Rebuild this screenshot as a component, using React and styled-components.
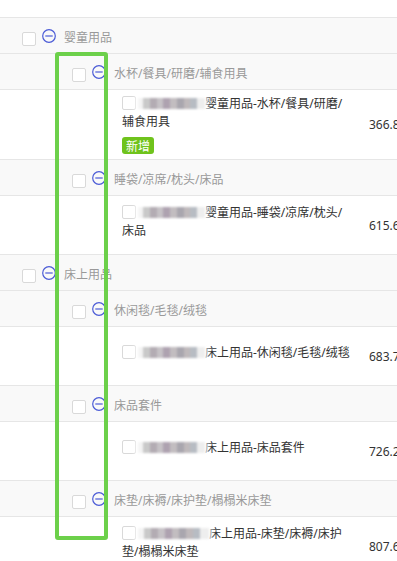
import React from "react";
import styled, { createGlobalStyle } from "styled-components";

const Global = createGlobalStyle`
  html, body { margin: 0; padding: 0; background: #fff; }
  body {
    font-family: "Noto Sans", "Noto Sans CJK SC", sans-serif;
    overflow: hidden;
  }
  * { box-sizing: border-box; }
`;

const Page = styled.div`
  position: relative;
  width: 397px;
  height: 561px;
  overflow: hidden;
`;

const Table = styled.div`
  width: 520px;
`;

const TopRow = styled.div`
  height: 18px;
  border-bottom: 1px solid #e6e6e6;
`;

const GroupRow = styled.div`
  display: flex;
  align-items: center;
  height: 36px;
  padding-left: ${(p) => 22 + p.$level * 50}px;
  background: #f9f9f9;
  border-bottom: 1px solid #e6e6e6;
`;

const Box = styled.span`
  display: inline-block;
  width: 14px;
  height: 14px;
  border: 1px solid #d9d9d9;
  border-radius: 2px;
  background: #fff;
  flex: none;
`;

const RowBox = styled(Box)`
  margin-top: 6px;
`;

const InlineBox = styled(Box)`
  vertical-align: -2px;
  margin-right: 2px;
`;

const IconWrap = styled.span`
  display: inline-flex;
  width: 14px;
  height: 14px;
  margin-left: 6px;
  flex: none;
`;

const Label = styled.span`
  margin-left: 8px;
  margin-top: 2px;
  font-size: 12px;
  color: #999;
  white-space: nowrap;
`;

const ItemRow = styled.div`
  display: flex;
  align-items: center;
  min-height: 59px;
  padding: 5px 0 5px 122px;
  border-bottom: 1px solid #e6e6e6;
  background: #fff;
`;

const NameCell = styled.div`
  width: 230px;
  flex: none;
`;

const NameText = styled.div`
  font-size: 12px;
  line-height: 18px;
  color: #333;
`;

const Blur = styled.span`
  display: inline-block;
  width: ${(p) => p.$w}px;
  height: 11px;
  vertical-align: -1px;
  background: linear-gradient(
    90deg,
    #f4f4f4 0 8%,
    #c9c9c9 8% 18%,
    #b3acb3 18% 28%,
    #c6c2c6 28% 38%,
    #aea2b0 38% 48%,
    #c2bdc0 48% 58%,
    #a9a6ae 58% 68%,
    #bfb9bb 68% 78%,
    #b7bcc3 78% 88%,
    #eeeeee 88% 100%
  );
  filter: blur(1.3px);
  box-shadow: 0 0 4px 3px rgba(255, 255, 255, 0.7);
`;

const TagArea = styled.div`
  padding-top: 6px;
  display: flex;
`;

const Badge = styled.span`
  display: inline-flex;
  align-items: center;
  height: 17px;
  padding: 0 4px;
  border-radius: 3px;
  background: #6fc31c;
  color: #fff;
  font-size: 12px;
`;

const Price = styled.div`
  margin-left: 17px;
  font-size: 12px;
  color: #333;
  white-space: nowrap;
`;

const Highlight = styled.div`
  position: absolute;
  left: 55px;
  top: 52px;
  width: 53px;
  height: 488px;
  border: 4px solid #6cd04a;
  border-radius: 3px;
  pointer-events: none;
`;

const MinusCircle = () => (
  <IconWrap>
    <svg width="14" height="14" viewBox="0 0 14 14">
      <circle cx="7" cy="7" r="6.3" fill="none" stroke="#4b5bd6" strokeWidth="1.2" />
      <line x1="3.3" y1="7" x2="10.7" y2="7" stroke="#4b5bd6" strokeWidth="1.2" />
    </svg>
  </IconWrap>
);

const Group = ({ level, label }) => (
  <GroupRow $level={level}>
    <RowBox />
    <MinusCircle />
    <Label>{label}</Label>
  </GroupRow>
);

const Item = ({ name, price, badge, blur = 67 }) => (
  <ItemRow>
    <NameCell>
      <NameText>
        <InlineBox />
        <Blur $w={blur} />
        {name}
      </NameText>
      <TagArea>{badge && <Badge>{badge}</Badge>}</TagArea>
    </NameCell>
    <Price>{price}</Price>
  </ItemRow>
);

const data = [
  {
    label: "婴童用品",
    subs: [
      { label: "水杯/餐具/研磨/辅食用具", name: "婴童用品-水杯/餐具/研磨/辅食用具", price: "366.80", badge: "新增" },
      { label: "睡袋/凉席/枕头/床品", name: "婴童用品-睡袋/凉席/枕头/床品", price: "615.60" },
    ],
  },
  {
    label: "床上用品",
    subs: [
      { label: "休闲毯/毛毯/绒毯", name: "床上用品-休闲毯/毛毯/绒毯", price: "683.70" },
      { label: "床品套件", name: "床上用品-床品套件", price: "726.20" },
      { label: "床垫/床褥/床护垫/榻榻米床垫", name: "床上用品-床垫/床褥/床护垫/榻榻米床垫", price: "807.60", blur: 71 },
    ],
  },
];

export default function App() {
  return (
    <>
      <Global />
      <Page>
        <Table>
          <TopRow />
          {data.map((g) => (
            <React.Fragment key={g.label}>
              <Group level={0} label={g.label} />
              {g.subs.map((s) => (
                <React.Fragment key={s.label}>
                  <Group level={1} label={s.label} />
                  <Item name={s.name} price={s.price} badge={s.badge} blur={s.blur} />
                </React.Fragment>
              ))}
            </React.Fragment>
          ))}
        </Table>
        <Highlight />
      </Page>
    </>
  );
}
